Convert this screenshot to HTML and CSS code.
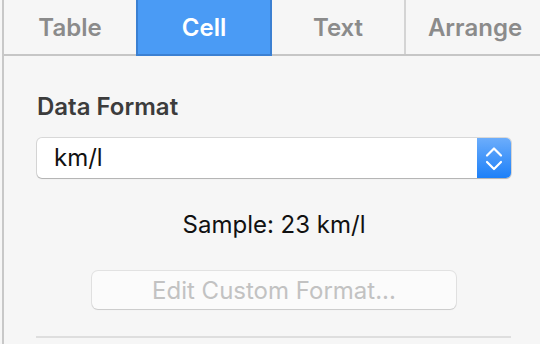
FILE: index.html
```html
<!DOCTYPE html>
<html>
<head>
<meta charset="utf-8">
<link rel="stylesheet" href="styles.css">
</head>
<body>
<div class="panel">
  <nav class="tabs">
    <div class="tab tab-table">Table</div>
    <div class="tab tab-cell active">Cell</div>
    <div class="tab tab-text">Text</div>
    <div class="tab tab-arrange">Arrange</div>
  </nav>
  <section class="content">
    <h2 class="label">Data Format</h2>
    <div class="select">
      <span class="value">km/l</span>
      <span class="stepper">
        <svg width="34" height="40" viewBox="0 0 34 40">
          <polyline points="10,17.5 17,10.5 24,17.5" fill="none" stroke="#fff" stroke-width="2.2" stroke-linecap="round" stroke-linejoin="round"/>
          <polyline points="10,24 17,31 24,24" fill="none" stroke="#fff" stroke-width="2.2" stroke-linecap="round" stroke-linejoin="round"/>
        </svg>
      </span>
    </div>
    <p class="sample">Sample: 23 km/l</p>
    <div class="btn-row"><button class="btn" disabled>Edit Custom Format...</button></div>
    <div class="sep"></div>
  </section>
</div>
</body>
</html>
```

FILE: styles.css
```css
html, body {
  margin: 0;
  padding: 0;
  background: #f6f6f6;
  overflow: hidden;
}
body {
  font-family: "Inter", "Liberation Sans", sans-serif;
  width: 540px;
  height: 344px;
}
.panel {
  margin-left: 2px;
  border-left: 2px solid #c8c8c8;
  height: 344px;
  background: #f6f6f6;
}
.tabs {
  display: flex;
  height: 54px;
  border-bottom: 2px solid #c6c6c6;
}
.tab {
  box-sizing: border-box;
  display: flex;
  align-items: center;
  justify-content: center;
  font-size: 24px;
  font-weight: 600;
  color: #8b8b8b;
  padding-top: 1px;
}
.tab-table { width: 132px; }
.tab-cell { width: 136px; }
.tab-text { width: 134px; border-right: 2px solid #d4d4d4; }
.tab-arrange { flex: 1; padding-left: 4px; }
.tab.active {
  background: #4a9bf5;
  color: #ffffff;
  border: 2px solid #3b80d2;
  border-top: none;
  height: 56px;
}
.content {
  padding: 0 29px 0 33px;
}
.label {
  margin: 37px 0 0;
  font-size: 24px;
  line-height: 28px;
  font-weight: 600;
  color: #3c3c3c;
}
.select {
  margin-top: 17px;
  height: 40px;
  box-sizing: border-box;
  display: flex;
  background: #ffffff;
  border-radius: 5px;
  box-shadow: 0 0 0 1px rgba(0,0,0,0.12), 0 1px 1px rgba(0,0,0,0.18);
  overflow: hidden;
}
.value {
  flex: 1;
  padding-left: 17px;
  font-size: 24px;
  line-height: 40px;
  color: #111;
}
.stepper {
  width: 34px;
  height: 40px;
  background: linear-gradient(#6cadfb, #1d80f8);
}
.stepper svg { display: block; }
.sample {
  margin: 33px 0 0;
  text-align: center;
  font-size: 24px;
  line-height: 28px;
  color: #111;
}
.btn-row {
  display: flex;
  justify-content: center;
  margin-top: 32px;
}
.btn {
  width: 364px;
  height: 38px;
  box-sizing: border-box;
  border: none;
  border-radius: 6px;
  background: #fbfbfb;
  box-shadow: 0 0 0 1px rgba(0,0,0,0.08), 0 1px 1px rgba(0,0,0,0.1);
  font-family: inherit;
  font-size: 24px;
  color: #c2c2c2;
  padding: 0;
}
.sep {
  margin-top: 27px;
  margin-left: -1px;
  height: 2px;
  background: #dedede;
}
```
